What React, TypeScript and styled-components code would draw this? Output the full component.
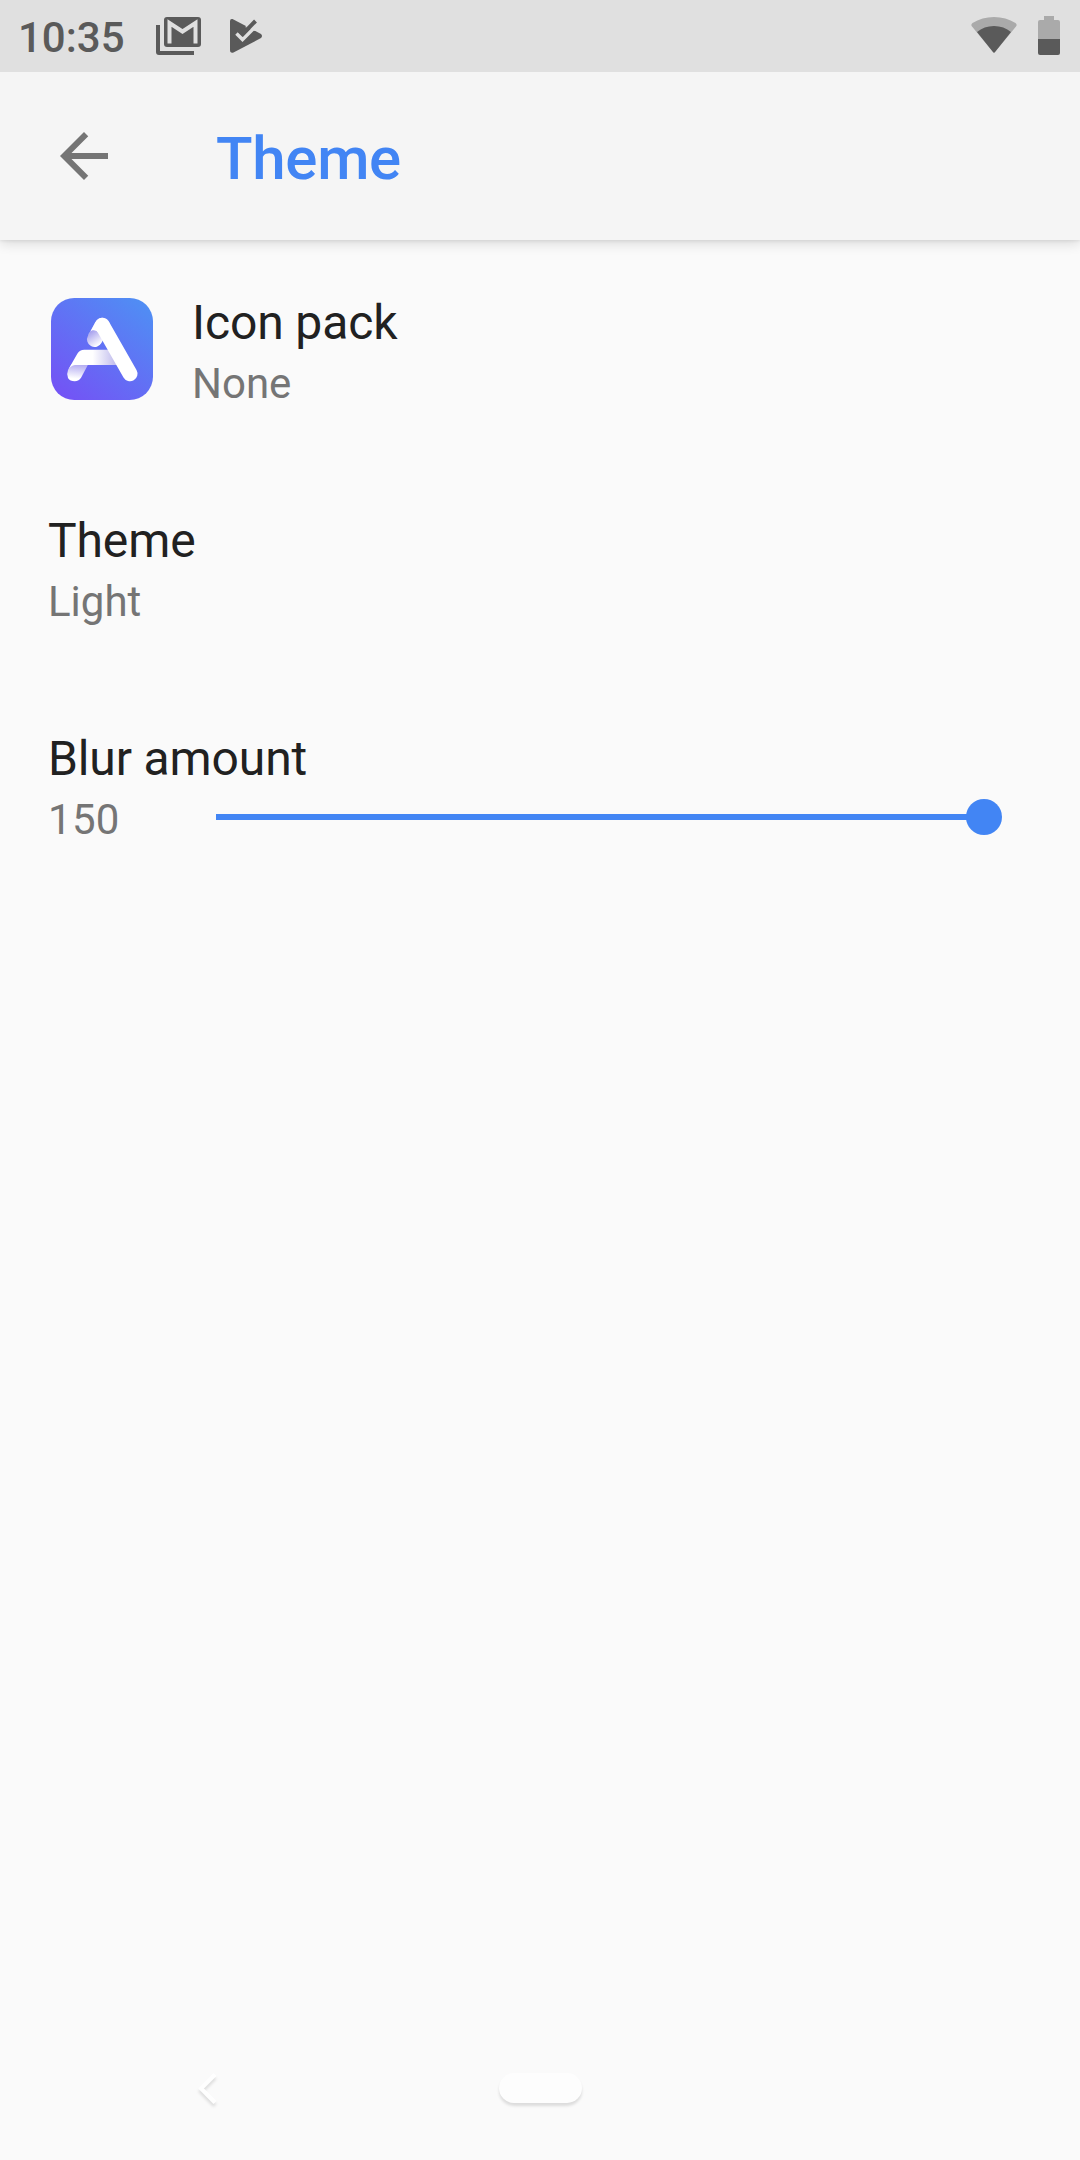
import React from "react";
import styled, { createGlobalStyle } from "styled-components";

const GlobalStyle = createGlobalStyle`
  * { box-sizing: border-box; }
  body { margin: 0; background: #fafafa; }
`;

const Screen = styled.div`
  width: 1080px;
  height: 2160px;
  display: flex;
  flex-direction: column;
  overflow: hidden;
  background: #fafafa;
  font-family: Roboto, "Liberation Sans", sans-serif;
`;

const StatusBar = styled.div`
  flex: none;
  height: 72px;
  position: relative;
  z-index: 1;
  display: flex;
  justify-content: space-between;
  padding: 0 20px 0 18px;
  background: #e0e0e0;
`;

const StatusGroup = styled.div<{ $gap: number }>`
  display: flex;
  align-items: center;
  gap: ${(p) => p.$gap}px;
`;

const Clock = styled.span`
  width: 110px;
  font-size: 42px;
  font-weight: 500;
  line-height: 58px;
  padding-top: 4px;
  color: #5a5a5a;
`;

const Glyph = styled.svg`
  display: block;
  flex: none;
`;

const AppBar = styled.header`
  flex: none;
  height: 168px;
  display: flex;
  align-items: center;
  padding-left: 48px;
  background: #f5f5f5;
  box-shadow: 0 3px 12px rgba(0, 0, 0, 0.14), 0 1px 3px rgba(0, 0, 0, 0.07);
`;

const BackButton = styled.button`
  width: 168px;
  height: 72px;
  padding: 0;
  border: 0;
  background: none;
`;

const ScreenTitle = styled.h1`
  margin: 0;
  padding-top: 6px;
  font-size: 60px;
  font-weight: 500;
  line-height: 70px;
  letter-spacing: -0.3px;
  color: #4285f4;
`;

const List = styled.main`
  flex: 1;
  padding-top: 3px;
`;

const Row = styled.section`
  height: 218px;
  display: flex;
  align-items: center;
  padding: 0 78px 0 48px;
`;

const IconSlot = styled.div`
  width: 144px;
  padding: 0 0 6px 3px;
`;

const RowText = styled.div`
  flex: 1;
`;

const RowTitle = styled.div`
  font-size: 48px;
  line-height: 64px;
  letter-spacing: -0.12px;
  color: #212121;
`;

const RowSummary = styled.div`
  font-size: 42px;
  line-height: 58px;
  color: #757575;
`;

const SliderLine = styled.div`
  display: flex;
  align-items: center;
`;

const SliderValue = styled(RowSummary)`
  width: 168px;
  letter-spacing: 0.3px;
`;

const Slider = styled.div`
  flex: 1;
  display: flex;
  align-items: center;
  margin-bottom: 6px;
`;

const Track = styled.div`
  flex: 1;
  height: 6px;
  margin-right: -2px;
  background: #4285f4;
`;

const Thumb = styled.div`
  width: 36px;
  height: 36px;
  border-radius: 50%;
  background: #4285f4;
`;

const NavBar = styled.nav`
  flex: none;
  height: 144px;
  display: flex;
  align-items: center;
  padding-left: 186px;
`;

const NavGlyph = styled(Glyph)`
  filter: drop-shadow(0 3px 1.5px rgba(0, 0, 0, 0.12));
`;

const HomePill = styled.div`
  width: 83px;
  height: 30px;
  margin-left: 264.5px;
  border-radius: 15px;
  background: #fdfdfd;
  box-shadow: 0 3px 3px rgba(0, 0, 0, 0.12);
`;

const MailIcon = () => (
  <Glyph width="46" height="72" viewBox="0 0 46 72">
    <path d="M0 25h4v26h34v4H3a3 3 0 0 1-3-3z" fill="#5a5a5a" />
    <rect x="8" y="17" width="37" height="30" rx="3" fill="#5a5a5a" />
    <path d="M13.500 43.500V23L26.500 31.500 39.500 23v20.500" fill="none" stroke="#e0e0e0" strokeWidth="4" />
  </Glyph>
);

const PlayIcon = () => (
  <Glyph width="34" height="72" viewBox="0 0 34 72">
    <path
      d="M0 21Q0 18.500 2.500 19L31 34Q33 36 31 38L3.500 52.500Q0 53.500 0 50z"
      fill="#5a5a5a"
    />
    <path d="M15 27L29 18L30 29L25 31z" fill="#e0e0e0" />
    <path d="M6.500 33.500l6 6L27 25" fill="none" stroke="#e0e0e0" strokeWidth="3.500" />
    <path d="M9.500 30.500L13 34L25.500 21" fill="none" stroke="#5a5a5a" strokeWidth="4" />
  </Glyph>
);

const WifiIcon = () => (
  <Glyph width="46" height="72" viewBox="0 0 46 72">
    <path d="M1 26.500Q-0.500 24.500 1.500 23Q11 17 23 17T44.500 23Q46.500 24.500 45 26.500L24 52Q23 53.500 22 52z" fill="#aaa" />
    <path d="M6 32Q13 26 23 26T40 32L24 52Q23 53.500 22 52z" fill="#5a5a5a" />
  </Glyph>
);

const BatteryIcon = () => (
  <Glyph width="22" height="72" viewBox="0 0 22 72">
    <path d="M6 16h10v4h4a2 2 0 0 1 2 2v17H0V22a2 2 0 0 1 2-2h4z" fill="#aaa" />
    <path d="M0 39h22v14a2 2 0 0 1-2 2H2a2 2 0 0 1-2-2z" fill="#5a5a5a" />
  </Glyph>
);

const ArrowIcon = () => (
  <Glyph width="72" height="72" viewBox="0 0 24 24">
    <path d="M20 11H7.830l5.590-5.590L12 4l-8 8 8 8 1.410-1.410L7.830 13H20v-2z" fill="#757575" />
  </Glyph>
);

const IconPackLogo = () => (
  <Glyph width="102" height="102" viewBox="0 0 306 306">
    <defs>
      <linearGradient id="tile" x1="0.1" y1="1" x2="0.9" y2="0">
        <stop offset="0" stopColor="#7452f5" />
        <stop offset="1" stopColor="#4f8ff4" />
      </linearGradient>
      <linearGradient id="fold" gradientUnits="userSpaceOnUse" x1="116" y1="104" x2="142" y2="142">
        <stop offset="0" stopColor="#a9a3ee" />
        <stop offset="1" stopColor="#fff" />
      </linearGradient>
      <linearGradient id="bar" gradientUnits="userSpaceOnUse" x1="125" y1="0" x2="190" y2="0">
        <stop offset="0" stopColor="#fff" />
        <stop offset="1" stopColor="#c4c0ee" />
      </linearGradient>
      <linearGradient id="foot" gradientUnits="userSpaceOnUse" x1="76" y1="200" x2="72" y2="242">
        <stop offset="0" stopColor="#b5aef2" />
        <stop offset="1" stopColor="#fff" />
      </linearGradient>
    </defs>
    <rect width="306" height="306" rx="70" fill="url(#tile)" />
    <path d="M131 124L154 82" stroke="url(#fold)" strokeWidth="46" strokeLinecap="round" />
    <path d="M111 113L132 74Q140 60 154 59L160 100L143 106Q136 94 124 97Q116 100 111 113Z" fill="#fff" />
    <path d="M51 216L62 198H112L91 238Q84 250 71 250Q57 250 51 240Q46 229 51 216Z" fill="url(#foot)" />
    <path d="M51 216L79 167Q86 155 100 155H175L200 201H72Q59 202 51 216Z" fill="url(#bar)" />
    <path d="M154 82L237 227" stroke="#fff" strokeWidth="45" strokeLinecap="round" />
  </Glyph>
);

const NavBack = () => (
  <NavGlyph width="48" height="72" viewBox="0 0 48 72">
    <path d="M29 22.500L15 36.500L29 50.500" fill="none" stroke="#fefefe" strokeWidth="4" />
  </NavGlyph>
);

export default function App() {
  return (
    <>
      <GlobalStyle />
      <Screen>
        <StatusBar>
          <StatusGroup $gap={28}>
            <Clock>10:35</Clock>
            <MailIcon />
            <PlayIcon />
          </StatusGroup>
          <StatusGroup $gap={21}>
            <WifiIcon />
            <BatteryIcon />
          </StatusGroup>
        </StatusBar>
        <AppBar>
          <BackButton aria-label="Navigate up">
            <ArrowIcon />
          </BackButton>
          <ScreenTitle>Theme</ScreenTitle>
        </AppBar>
        <List>
          <Row>
            <IconSlot>
              <IconPackLogo />
            </IconSlot>
            <RowText>
              <RowTitle>Icon pack</RowTitle>
              <RowSummary>None</RowSummary>
            </RowText>
          </Row>
          <Row>
            <RowText>
              <RowTitle>Theme</RowTitle>
              <RowSummary>Light</RowSummary>
            </RowText>
          </Row>
          <Row>
            <RowText>
              <RowTitle>Blur amount</RowTitle>
              <SliderLine>
                <SliderValue>150</SliderValue>
                <Slider>
                  <Track />
                  <Thumb />
                </Slider>
              </SliderLine>
            </RowText>
          </Row>
        </List>
        <NavBar>
          <NavBack />
          <HomePill />
        </NavBar>
      </Screen>
    </>
  );
}
